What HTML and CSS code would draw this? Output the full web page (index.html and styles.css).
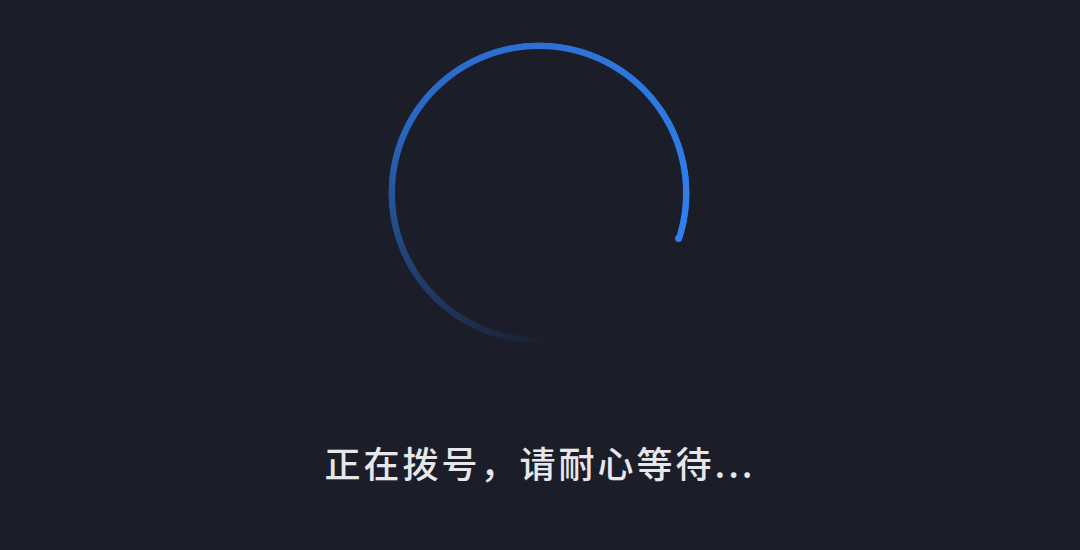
FILE: index.html
```html
<!DOCTYPE html>
<html lang="zh-CN">
<head>
<meta charset="utf-8">
<title>拨号中</title>
<link rel="stylesheet" href="styles.css">
</head>
<body>
<main class="dialing">
  <div class="spinner">
    <div class="spinner-ring"></div>
    <span class="spinner-head"></span>
  </div>
  <p class="status">正在拨号，请耐心等待...</p>
</main>
</body>
</html>
```
FILE: styles.css
```css
html, body {
  margin: 0;
  height: 100%;
  background: #1b1d29;
}

.dialing {
  display: flex;
  flex-direction: column;
  align-items: center;
  height: 100%;
}

.spinner {
  position: relative;
  width: 302px;
  height: 302px;
  margin-top: 42px;
  margin-right: 2px;
}

/* arc: fades in from the bottom, runs clockwise, ends right of centre */
.spinner-ring {
  width: 100%;
  height: 100%;
  border-radius: 50%;
  background: conic-gradient(from 175deg,
    rgba(47, 128, 240, 0) 0deg,
    rgba(44, 110, 210, 0.4) 60deg,
    rgba(45, 118, 225, 0.85) 125deg,
    #2f80f0 293deg,
    transparent 293deg);
  -webkit-mask: radial-gradient(circle closest-side, transparent 143.5px, #000 144.5px, #000 150px, transparent 151px);
  mask: radial-gradient(circle closest-side, transparent 143.5px, #000 144.5px, #000 150px, transparent 151px);
}

/* rounded cap at the leading end of the arc */
.spinner-head {
  position: absolute;
  left: 287px;
  top: 192.5px;
  width: 7px;
  height: 7px;
  border-radius: 50%;
  background: #2f80f0;
}

.status {
  margin: 94px 0 0;
  font-family: "Noto Sans CJK SC", "Noto Sans", sans-serif;
  font-size: 36px;
  font-weight: 500;
  line-height: 48px;
  letter-spacing: 3px;
  color: #e6e7ea;
}
```
